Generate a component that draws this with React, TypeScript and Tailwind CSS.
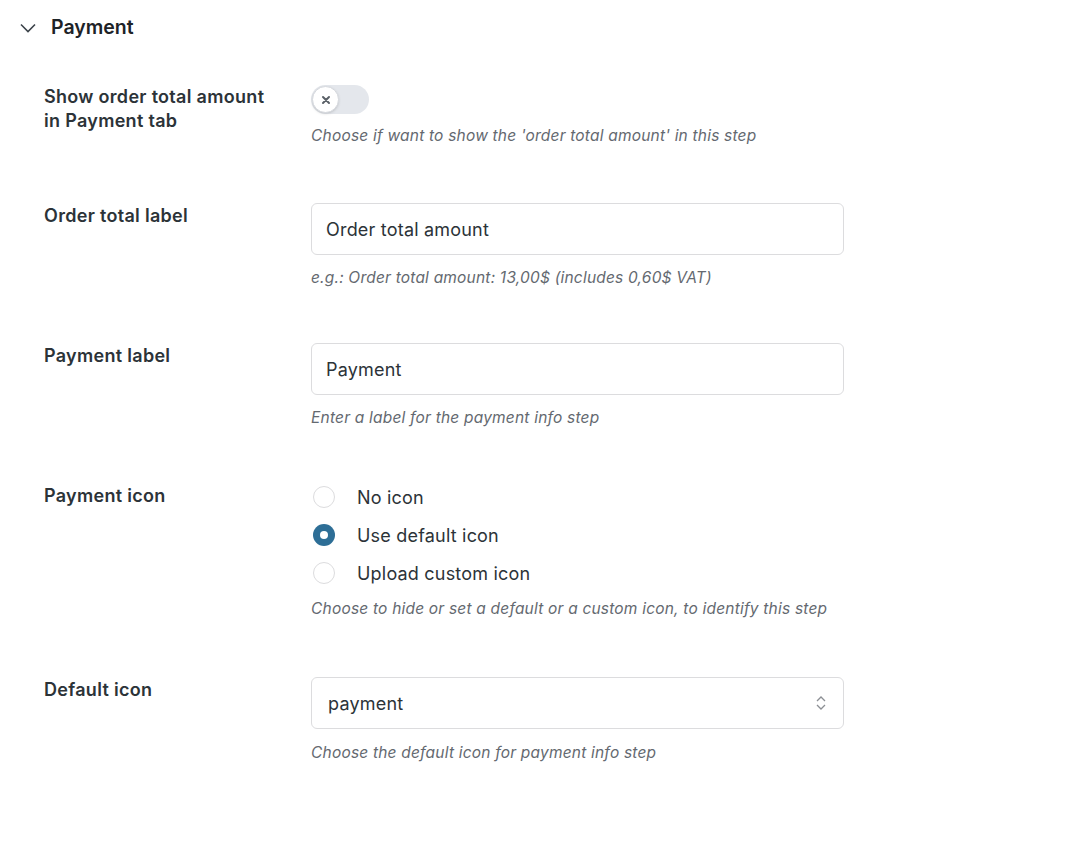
import React, { useState } from 'react';

const font = { fontFamily: 'Inter, "Noto Sans", sans-serif' };

function Row({
  label,
  children,
  desc,
  descMt = 'mt-[13px]',
  pb = 'pb-[55px]',
}: {
  label: React.ReactNode;
  children: React.ReactNode;
  desc: string;
  descMt?: string;
  pb?: string;
}) {
  return (
    <div className={`flex ${pb}`}>
      <div className="w-[267px] shrink-0 pt-[1px] text-[18px] leading-[24px] font-semibold tracking-[0.3px] text-[#2c3338]">{label}</div>
      <div className="w-[533px]">
        {children}
        <p className={`${descMt} text-[15.5px] leading-[20px] italic tracking-[0.2px] text-[#646970]`}>{desc}</p>
      </div>
    </div>
  );
}

function TextInput({ value }: { value: string }) {
  return (
    <div className="h-[52px] rounded-md border border-[#dcdcde] bg-white px-[14px] flex items-center text-[18px] tracking-[0.2px] text-[#2c3338]">
      {value}
    </div>
  );
}

export default function App() {
  const [icon, setIcon] = useState('default');
  const options = [
    { id: 'none', label: 'No icon' },
    { id: 'default', label: 'Use default icon' },
    { id: 'custom', label: 'Upload custom icon' },
  ];

  return (
    <div className="min-h-[848px] bg-white pl-[20px] pt-[15px]" style={font}>
      <div className="flex items-center gap-[15px] h-[26px] text-[#1d2327]">
        <svg width="16" height="16" viewBox="0 0 16 16" fill="none" stroke="#3c434a" strokeWidth="1.6">
          <path d="M1 4.5l7 7 7-7" />
        </svg>
        <span className="text-[19.5px] font-semibold">Payment</span>
      </div>

      <div className="pl-[24px] pt-[43px]">
        <Row
          label={<>Show order total amount<br />in Payment tab</>}
          desc="Choose if want to show the 'order total amount' in this step"
          descMt="mt-[12px]"
          pb="pb-[57px]"
        >
          <div className="h-[29px] w-[58px] rounded-full bg-[#e4e7ec] mt-[1px] flex items-center">
            <div className="h-[27px] w-[27px] ml-[1px] rounded-full bg-white border border-[#d6d9de] shadow-sm flex items-center justify-center">
              <svg width="10" height="10" viewBox="0 0 10 10" stroke="#5b6168" strokeWidth="2" strokeLinecap="round">
                <path d="M2 2l6 6M8 2l-6 6" />
              </svg>
            </div>
          </div>
        </Row>

        <Row label="Order total label" desc="e.g.: Order total amount: 13,00$ (includes 0,60$ VAT)">
          <TextInput value="Order total amount" />
        </Row>

        <Row label="Payment label" desc="Enter a label for the payment info step">
          <TextInput value="Payment" />
        </Row>

        <Row
          label="Payment icon"
          desc="Choose to hide or set a default or a custom icon, to identify this step"
          descMt="mt-[15px]"
          pb="pb-[58px]"
        >
          <div className="flex flex-col gap-[16px] pt-[3px]">
            {options.map((o) => (
              <label key={o.id} className="flex items-center gap-[22px] h-[22px] pl-[2px] cursor-pointer" onClick={() => setIcon(o.id)}>
                {icon === o.id ? (
                  <span className="h-[22px] w-[22px] rounded-full bg-[#2d6e96] flex items-center justify-center">
                    <span className="h-[8px] w-[8px] rounded-full bg-white" />
                  </span>
                ) : (
                  <span className="h-[22px] w-[22px] rounded-full border border-[#dcdcde] bg-white" />
                )}
                <span className="text-[18px] tracking-[0.2px] text-[#2c3338]">{o.label}</span>
              </label>
            ))}
          </div>
        </Row>

        <Row label="Default icon" desc="Choose the default icon for payment info step" descMt="mt-[14px]">
          <div className="h-[52px] rounded-md border border-[#dcdcde] bg-white pl-[16px] pr-[16px] flex items-center justify-between text-[18px] tracking-[0.2px] text-[#2c3338]">
            <span>payment</span>
            <svg width="12" height="18" viewBox="0 0 12 18" fill="none" stroke="#8c8f94" strokeWidth="1.3">
              <path d="M2 7l4-4 4 4M2 11l4 4 4-4" />
            </svg>
          </div>
        </Row>
      </div>
    </div>
  );
}
